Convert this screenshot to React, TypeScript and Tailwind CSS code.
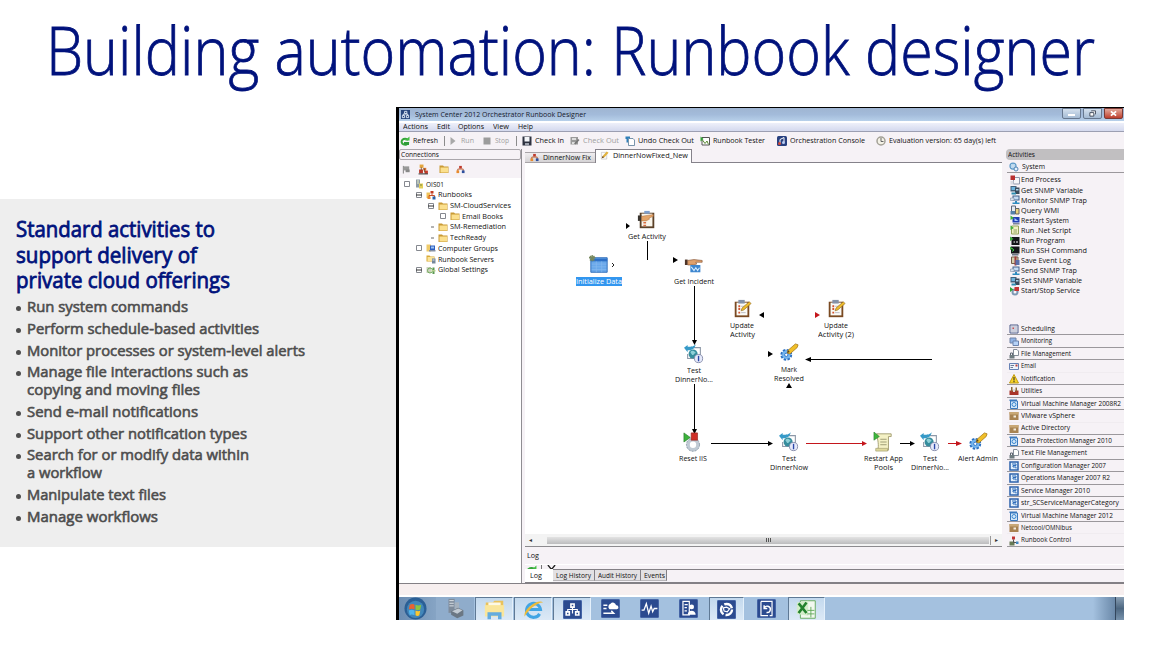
import { useLayoutEffect, useRef, type ReactNode } from "react";
import clsx from "clsx";

// Keeps a line of text at a fixed width, whatever the font's own metrics are
function Fit({ w, children, className }: { w: number; children: ReactNode; className?: string }) {
  const ref = useRef<HTMLSpanElement>(null);
  useLayoutEffect(() => {
    const el = ref.current;
    if (!el) return;
    el.style.transform = "none";
    el.style.transform = `scaleX(${w / el.getBoundingClientRect().width})`;
  }, [w]);
  return (
    <span className={clsx("block shrink-0", className)} style={{ width: w }}>
      <span ref={ref} className="inline-block origin-left whitespace-nowrap">{children}</span>
    </span>
  );
}

const TREE_GLYPHS: Record<string, ReactNode> = {
  folder: (
    <>
      <path d="M1 3h7l2 2h9v13H1z" fill="#c99a34" />
      <path d="M3 7h15v10H3z" fill="#fbe08e" />
    </>
  ),
  server: (
    <>
      <path d="M4 1h8v16H4z" fill="#8d9aa5" />
      <path d="M6 3h4v2H6zM6 7h4v2H6z" fill="#e8f0c8" />
      <path d="M10 9h8v10h-8z" fill="#e3cf5a" />
      <path d="M12 11h4v2h-4z" fill="#7c8a3c" />
    </>
  ),
  runbooks: (
    <>
      <path d="M1 5h7v11H1z" fill="#f0c35a" />
      <path d="M9 2h6v5H9z" fill="#c33c22" />
      <path d="M12 7v4M6 15v-4h11v4" stroke="#c8502c" strokeWidth="2" fill="none" />
      <path d="M3 13h6v5H3z" fill="#e78b32" />
      <path d="M13 13h6v6h-6z" fill="#2a62a8" />
    </>
  ),
  org: (
    <>
      <path d="M7 2h6v6H7z" fill="#c0392b" />
      <path d="M4 14V9h12v5" stroke="#b4582c" strokeWidth="2" fill="none" />
      <path d="M1 12h6v6H1z" fill="#e88a2d" />
      <path d="M13 12h6v6h-6z" fill="#2d4f9e" />
    </>
  ),
  computers: (
    <>
      <path d="M1 3h9v14H1z" fill="#efcb6a" />
      <path d="M8 5h10v9H8z" fill="#2e5fc0" />
      <path d="M10 7h6v4h-6z" fill="#9bc4f5" />
      <path d="M6 14h13v3H6z" fill="#8590a5" />
    </>
  ),
  bookServers: (
    <>
      <path d="M1 3h6l2 2h8v10H1z" fill="#d9a937" />
      <path d="M3 6h13v8H3z" fill="#fbe49a" />
      <path d="M12 9h7v10h-7z" fill="#74879b" />
      <path d="M13 11h4v2h-4z" fill="#dce6ee" />
    </>
  ),
  settings: (
    <>
      <path d="M1 4h9v12H1z" fill="#cdd0c0" />
      <circle cx="8" cy="11" r="5" fill="none" stroke="#6fae57" strokeWidth="2" />
      <path d="M13 5h4v13h-4z" fill="#5b9952" />
      <path d="M11 10h8v3h-8z" fill="#b5cf8f" />
    </>
  ),
  people: (
    <>
      <path d="M3 1h7v6H3z" fill="#e3a53d" />
      <path d="M2 10h7v7H2z" fill="#bb3427" />
      <path d="M10 7h5v5h-5z" fill="#e0742c" />
      <path d="M12 12h6v6h-6z" fill="#c53a2a" />
      <path d="M6 6v5M9 9h3v6" stroke="#6d4a2a" strokeWidth="1.500" fill="none" />
      <path d="M1 17h17v2H1z" fill="#444" />
    </>
  ),
  flag: (
    <>
      <path d="M3 2v17" stroke="#777" strokeWidth="2" />
      <path d="M4 3h12v9H4z" fill="#999" />
      <path d="M8 10h9v6H8z" fill="#888" />
    </>
  ),
  refresh: (
    <>
      <path d="M16 8a7 6 0 1 0 1 5" fill="none" stroke="#35a639" strokeWidth="4" />
      <path d="M10 9h9V1z" fill="#43bd44" />
      <path d="M8 12h10v6H8z" fill="#2f9c38" />
    </>
  ),
  play: <path d="M5 2v16l10-8z" fill="#a8a8a8" />,
  stop: <path d="M3 3h14v14H3z" fill="#9c9c9c" />,
  save: (
    <>
      <path d="M1 1h18v18H1z" fill="#2e3240" />
      <path d="M5 2h10v9H5z" fill="#f3f5f8" />
      <path d="M6 14h8v5H6z" fill="#9da2ad" />
    </>
  ),
  checkout: (
    <>
      <path d="M1 2h15v15H1z" fill="#9a9a9a" />
      <path d="M4 4h8v4H4zM4 12h6v4H4z" fill="#ddd" />
      <path d="M8 15l8-9 3 2-8 9z" fill="#777" />
    </>
  ),
  undo: (
    <>
      <path d="M7 5h9l3 3v11H7z" fill="#fff" stroke="#4f7391" strokeWidth="1.500" />
      <path d="M1 1h9v4H6v8H3V6H1z" fill="#2f7fb8" />
    </>
  ),
  tester: (
    <>
      <path d="M4 3h15v15H4z" fill="#fff" stroke="#555" strokeWidth="2" />
      <path d="M1 1v10l6-5z" fill="#36a336" />
      <path d="M5 8l5 7 4-5 3 7" stroke="#5d8c36" strokeWidth="2" fill="none" />
    </>
  ),
  console: (
    <>
      <rect x="0" y="0" width="20" height="20" rx="3" fill="#28407f" />
      <path d="M6 16V7l8-4v9" stroke="#fff" strokeWidth="2" fill="none" />
      <circle cx="5" cy="15" r="3" fill="#d44b3b" />
      <circle cx="13" cy="13" r="3" fill="#b9cdf3" />
    </>
  ),
  clock: (
    <>
      <circle cx="10" cy="10" r="8" fill="#f4f2e6" stroke="#a3a096" strokeWidth="3" />
      <path d="M10 4v7h5" stroke="#666" strokeWidth="2" fill="none" />
    </>
  ),
  pencil: (
    <>
      <path d="M3 3h12v15H3z" fill="#fafafa" stroke="#a6a6a6" />
      <path d="M4 16l2-5 9-10 4 3-9 10z" fill="#e1b23e" />
      <path d="M4 16l2-5 3 3z" fill="#5a3a28" />
    </>
  ),
  app: (
    <>
      <path d="M0 0h20v20H0z" fill="#27457c" />
      <path d="M8 3h5v5H8zM3 12h5v5H3zM12 12h5v5h-5zM5 12V9h10v3" stroke="#e6effb" fill="none" strokeWidth="2" />
    </>
  ),
};

const ACT_GLYPHS: Record<string, ReactNode> = {
  gear: (
    <>
      <circle cx="8" cy="8" r="6" fill="#d8ecfa" stroke="#5d9ac8" strokeWidth="2.500" />
      <circle cx="8" cy="8" r="2.500" fill="#fff" stroke="#5d9ac8" />
      <circle cx="14" cy="14" r="4" fill="#e3f1fb" stroke="#5284b5" strokeWidth="2" />
    </>
  ),
  endProcess: (
    <>
      <path d="M7 5h12v13H7z" fill="#f6f6f8" stroke="#8f97aa" strokeWidth="2" />
      <path d="M1 1h9v9H1z" fill="#b93030" />
      <path d="M1 12h6v7H1z" fill="#d9dbe2" />
    </>
  ),
  snmp: (
    <>
      <path d="M1 2h12v11H1z" fill="#42627c" />
      <path d="M3 4h8v6H3z" fill="#6cb3dc" />
      <path d="M10 5h9v13h-9z" fill="#3a4b5c" />
      <path d="M12 8h5v3h-5z" fill="#a8d1e6" />
      <path d="M3 15h9v4H3z" fill="#2d8cb0" />
    </>
  ),
  trap: (
    <>
      <path d="M5 1h14v10H5z" fill="#44628b" />
      <path d="M7 3h10v6H7z" fill="#c4dcf4" />
      <path d="M1 6h7v5H1z" fill="#d8e2ee" stroke="#73839b" />
      <path d="M10 12h4v3h5v3H5v-3h5z" fill="#2e8cbf" />
    </>
  ),
  query: (
    <>
      <path d="M3 2h8v12H3z" fill="#e4eaf2" stroke="#5b6678" strokeWidth="2" />
      <path d="M11 7h7v11h-7z" fill="#e9d27c" stroke="#656565" strokeWidth="2" />
      <path d="M1 12h9v7H1z" fill="#5580a8" />
    </>
  ),
  restart: (
    <>
      <path d="M5 4h14v11H5z" fill="#1f3fb5" />
      <path d="M1 1v9l7-4z" fill="#3fae3c" />
      <path d="M9 6l8 6H9z" fill="#a9c8fa" />
      <path d="M6 16h13v3H6z" fill="#7e8799" />
    </>
  ),
  script: (
    <>
      <path d="M3 2h14v16H3z" fill="#f2f0c4" stroke="#94a35a" strokeWidth="2" />
      <path d="M1 1v9l7-4z" fill="#3fae3c" />
      <path d="M7 10h7M7 14h7" stroke="#8ea362" strokeWidth="2" />
    </>
  ),
  program: (
    <>
      <path d="M3 2h16v16H3z" fill="#15171a" />
      <path d="M0 1v9l7-4z" fill="#3fae3c" />
      <path d="M7 12h3M12 12h4" stroke="#fff" strokeWidth="2" />
    </>
  ),
  ssh: (
    <>
      <path d="M2 1h17v14H2z" fill="#15171a" />
      <path d="M0 1v7l6-3z" fill="#3fae3c" />
      <path d="M4 5l4 3-4 3" stroke="#42d04a" strokeWidth="2" fill="none" />
      <path d="M4 16h13v3H4z" fill="#6f7785" />
    </>
  ),
  eventLog: (
    <>
      <path d="M3 2h13v13H3z" fill="#d6cfae" stroke="#755e46" strokeWidth="2" />
      <path d="M9 1h4v18H9z" fill="#a23b3b" />
      <path d="M11 8h8v10h-8z" fill="#5b6fa8" />
    </>
  ),
  service: (
    <>
      <circle cx="10" cy="12" r="5" fill="none" stroke="#7d99b4" strokeWidth="4" />
      <path d="M0 2v10l7-5z" fill="#2fa436" />
      <path d="M9 2h9v8H9z" fill="#c83434" />
    </>
  ),
  calendar: (
    <>
      <path d="M2 2h16v16H2z" fill="#fff" stroke="#4a5886" strokeWidth="2" />
      <path d="M3 6h14M3 10h14M3 14h14M6 3v14M10 3v14M14 3v14" stroke="#8890ae" strokeWidth="1" />
      <path d="M7 7h3v3H7z" fill="#c85050" />
    </>
  ),
  monitor: (
    <>
      <path d="M2 2h12v10H2z" fill="#8fb3e6" stroke="#7183a5" strokeWidth="2" />
      <path d="M8 8h11v9H8z" fill="#b5d2f7" stroke="#6a82ad" strokeWidth="2" />
    </>
  ),
  file: (
    <>
      <path d="M9 1h7l3 3v9H9z" fill="#fff" stroke="#858d99" strokeWidth="2" />
      <path d="M3 12V8h4v4" stroke="#5f6772" strokeWidth="2" fill="none" />
      <path d="M1 12h10v7H1z" fill="#6e7b80" />
    </>
  ),
  mail: (
    <>
      <path d="M1 3h18v12H1z" fill="#eef3fb" stroke="#6681b5" strokeWidth="2" />
      <path d="M3 7h7M3 11h5" stroke="#6f7b95" strokeWidth="2" />
      <path d="M13 5h4v4h-4z" fill="#bf4038" />
    </>
  ),
  warn: (
    <>
      <path d="M10 1l9 17H1z" fill="#f8d52a" stroke="#c39b10" strokeWidth="2" />
      <path d="M10 6v7M10 14v2.500" stroke="#222" strokeWidth="2" />
    </>
  ),
  tools: (
    <>
      <path d="M1 9h18v9H1z" fill="#a9342a" />
      <path d="M4 2h3v9H4zM13 3h3v8h-3z" fill="#8c6a3a" />
      <path d="M8 6h4v6H8z" fill="#ddd" />
    </>
  ),
  vm: (
    <>
      <path d="M1 1h15v3H1z" fill="#3b79bd" />
      <path d="M3 4h14v15H3z" fill="#d5e7f8" stroke="#3b79bd" strokeWidth="2" />
      <circle cx="10" cy="11" r="4" fill="none" stroke="#3a87d0" strokeWidth="2" />
    </>
  ),
  box: (
    <>
      <path d="M1 2h18v16H1z" fill="#a88352" />
      <path d="M1 2h18v5H1z" fill="#c9a876" />
      <path d="M9 9h5v4H9z" fill="#f4ecdc" />
    </>
  ),
  sys: (
    <>
      <path d="M2 2h16v16H2z" fill="#e4effa" stroke="#2d62ac" strokeWidth="3" />
      <path d="M6 6h8v3H8v3h6v3" stroke="#2f6cba" strokeWidth="2" fill="none" />
    </>
  ),
  control: (
    <>
      <path d="M1 11h10v8H1z" fill="#687b56" />
      <path d="M6 1h6v6H6z" fill="#c03434" />
      <path d="M9 7v6h7" stroke="#555" strokeWidth="2" fill="none" />
      <path d="M14 11h5v5h-5z" fill="#3f87c1" />
    </>
  ),
};

function Glyph({ name, className }: { name: string; className: string }) {
  return (
    <svg viewBox="0 0 20 20" className={clsx("shrink-0", className)}>
      {TREE_GLYPHS[name] ?? ACT_GLYPHS[name]}
    </svg>
  );
}

const HEADING = [
  { text: "Standard activities to", w: 199 },
  { text: "support delivery of", w: 181 },
  { text: "private cloud offerings", w: 214 },
];

const BULLETS = [
  [{ text: "Run system commands", w: 161 }],
  [{ text: "Perform schedule-based activities", w: 232 }],
  [{ text: "Monitor processes or system-level alerts", w: 278 }],
  [{ text: "Manage file interactions such as", w: 221 }, { text: "copying and moving files", w: 173 }],
  [{ text: "Send e-mail notifications", w: 171 }],
  [{ text: "Support other notification types", w: 220 }],
  [{ text: "Search for or modify data within", w: 222 }, { text: "a workflow", w: 75 }],
  [{ text: "Manipulate text files", w: 139 }],
  [{ text: "Manage workflows", w: 131 }],
];

function Summary() {
  return (
    <div className="mt-[92px] h-[348px] w-[396px] bg-[#eeeeee] pl-4 pt-[18px]">
      <h2 className="text-[21px] leading-[25.6px] text-[#00127c] [-webkit-text-stroke:0.8px_#00127c]">
        {HEADING.map((l) => <Fit key={l.text} w={l.w}>{l.text}</Fit>)}
      </h2>
      <ul className="mt-[3.500px] flex flex-col gap-[3.700px] text-[15px] leading-[18px] text-[#4d4d4d] [-webkit-text-stroke:0.6px_#4d4d4d]">
        {BULLETS.map((lines) => (
          <li key={lines[0].text} className="flex">
            <span className="mt-[9px] mr-[6px] size-[5px] shrink-0 rounded-full bg-[#4d4d4d]" />
            <div>{lines.map((l) => <Fit key={l.text} w={l.w}>{l.text}</Fit>)}</div>
          </li>
        ))}
      </ul>
    </div>
  );
}

function TitleBar() {
  return (
    <div className="flex h-[13px] items-center bg-linear-to-b from-[#9fb5d2] via-[#a3bbda] to-[#b7d0ea] pl-[2px]">
      <Glyph name="app" className="size-[9px]" />
      <Fit w={171} className="ml-[5px] text-[7.500px] text-[#16202e]">System Center 2012 Orchestrator Runbook Designer</Fit>
      <div className="ml-auto flex h-[11px] items-start gap-[2px] self-start pr-px">
        <div className="flex h-[11px] w-[19px] items-center justify-center rounded-b-xs border border-[#67788f] bg-linear-to-b from-[#d5e1ee] to-[#a4bbd4]">
          <div className="mt-[2px] h-[2px] w-[7px] bg-white" />
        </div>
        <div className="flex h-[11px] w-[19px] items-center justify-center rounded-b-xs border border-[#67788f] bg-linear-to-b from-[#d5e1ee] to-[#a4bbd4]">
          <svg viewBox="0 0 8 8" className="size-[7px]">
            <path d="M2.500 1h5v4M1 3h4.500v4H1z" stroke="#333e4e" fill="#fff" />
          </svg>
        </div>
        <div className="flex h-[11px] w-[19px] items-center justify-center rounded-b-xs border border-[#7a3a35] bg-linear-to-b from-[#e2a79a] to-[#bd3c2c]">
          <svg viewBox="0 0 8 8" className="size-[7px]">
            <path d="M1 1.500l6 5M7 1.500l-6 5" stroke="#fff" strokeWidth="2" />
          </svg>
        </div>
      </div>
    </div>
  );
}

const MENUS = [
  { text: "Actions", w: 25, gap: "ml-[4px]" },
  { text: "Edit", w: 13, gap: "ml-[9px]" },
  { text: "Options", w: 26, gap: "ml-[8px]" },
  { text: "View", w: 16, gap: "ml-[9px]" },
  { text: "Help", w: 15, gap: "ml-[9px]" },
];

const TOOLS = [
  { icon: "refresh", text: "Refresh", w: 25, gap: "", dim: false },
  { icon: "", text: "", w: 0, gap: "ml-[6px]", dim: false },
  { icon: "play", text: "Run", w: 13, gap: "ml-[3px]", dim: true },
  { icon: "stop", text: "Stop", w: 14, gap: "ml-[8px]", dim: true },
  { icon: "", text: "", w: 0, gap: "ml-[7px]", dim: false },
  { icon: "save", text: "Check In", w: 29, gap: "ml-[5px]", dim: false },
  { icon: "checkout", text: "Check Out", w: 36, gap: "ml-[6px]", dim: true },
  { icon: "undo", text: "Undo Check Out", w: 56, gap: "ml-[6px]", dim: false },
  { icon: "tester", text: "Runbook Tester", w: 52, gap: "ml-[6px]", dim: false },
  { icon: "console", text: "Orchestration Console", w: 75, gap: "ml-[12px]", dim: false },
  { icon: "clock", text: "Evaluation version: 65 day(s) left", w: 107, gap: "ml-[11px]", dim: false },
];

function Bars() {
  return (
    <>
      <div className="flex h-[11px] items-center border-t-2 border-b border-t-white border-b-[#9c9fb2] bg-linear-to-b from-[#eef0fa] to-[#d4d9ee] text-[7.500px]">
        {MENUS.map((m) => <Fit key={m.text} w={m.w} className={m.gap}>{m.text}</Fit>)}
      </div>
      <div className="flex h-[17px] items-center bg-[#f6f2f6] pl-px text-[7.500px]">
        {TOOLS.map((t, i) =>
          t.icon ? (
            <div key={i} className={clsx("flex items-center gap-[3px]", t.gap, t.dim ? "text-[#a0a0a0]" : "text-[#111]")}>
              <Glyph name={t.icon} className="size-[10px]" />
              <Fit w={t.w}>{t.text}</Fit>
            </div>
          ) : (
            <div key={i} className={clsx("h-[10px] w-px bg-[#8c8c8c]", t.gap)} />
          )
        )}
      </div>
    </>
  );
}

const TREE = [
  { text: "OIS01", w: 18, icon: "server", pad: "pl-[5px]", mark: "box" },
  { text: "Runbooks", w: 34, icon: "runbooks", pad: "pl-[17px]", mark: "minus" },
  { text: "SM-CloudServices", w: 61, icon: "folder", pad: "pl-[29px]", mark: "minus" },
  { text: "Email Books", w: 41, icon: "folder", pad: "pl-[41px]", mark: "box" },
  { text: "SM-Remediation", w: 56, icon: "folder", pad: "pl-[29px]", mark: "dash" },
  { text: "TechReady", w: 36, icon: "folder", pad: "pl-[29px]", mark: "dash" },
  { text: "Computer Groups", w: 60, icon: "computers", pad: "pl-[17px]", mark: "box" },
  { text: "Runbook Servers", w: 56, icon: "bookServers", pad: "pl-[17px]", mark: "none" },
  { text: "Global Settings", w: 50, icon: "settings", pad: "pl-[17px]", mark: "minus" },
];

function Connections() {
  return (
    <div className="flex w-[123px] flex-col border-r border-[#8f8d92]">
      <div className="flex h-[11px] items-center rounded-xs border border-[#aaa6ab] bg-[#f6f2f6] pl-px text-[7.500px]">
        <Fit w={38}>Connections</Fit>
      </div>
      <div className="flex h-[18px] items-center bg-[#f6f2f6] pl-[3px]">
        <Glyph name="flag" className="size-[9px]" />
        <Glyph name="people" className="ml-[7px] size-[11px]" />
        <Glyph name="folder" className="ml-[10px] size-[10px]" />
        <Glyph name="org" className="ml-[7px] size-[9px]" />
      </div>
      <div className="flex-1 bg-white pt-px text-[7.500px]">
        {TREE.map((t) => (
          <div key={t.text} className={clsx("flex h-[10.700px] items-center", t.pad)}>
            <svg viewBox="0 0 6 6" className="mr-[4px] size-[6px] shrink-0">
              {(t.mark === "box" || t.mark === "minus") && <path d="M.5.5h5v5h-5z" fill="#fff" stroke="#85888f" />}
              {t.mark === "minus" && <path d="M0 3h6" stroke="#333" />}
              {t.mark === "dash" && <path d="M3 3h3" stroke="#666" />}
            </svg>
            <Glyph name={t.icon} className="mr-[2px] size-[10px]" />
            <Fit w={t.w}>{t.text}</Fit>
          </div>
        ))}
      </div>
    </div>
  );
}

const NODE_ART: Record<string, ReactNode> = {
  clipboard: (
    <>
      <path d="M3 3h16v17H3z" fill="#7a4a22" />
      <path d="M5 4h12v14H5z" fill="#fbfbf7" />
      <path d="M7 1h7v4H7z" fill="#8492a8" />
      <path d="M7 8h2M7 11h2M7 15h2" stroke="#d2532f" strokeWidth="2" />
      <path d="M10 8h5M10 15h5" stroke="#b8b8c0" />
      <path d="M10 13l1-3 8-7 2 2-8 7z" fill="#eebc2d" stroke="#926b20" strokeWidth=".7" />
    </>
  ),
  getActivity: (
    <>
      <path d="M3 3h16v17H3z" fill="#5b4128" />
      <path d="M5 4h12v14H5z" fill="#faf6ec" />
      <path d="M8 1h6v3H8z" fill="#7e9fce" />
      <path d="M1 6h4v6H1z" fill="#39342f" />
      <path d="M5 7l6-1 7-1v2l-5 2 1 1-4 2H5z" fill="#e3a468" stroke="#a8683a" strokeWidth=".5" />
      <path d="M7 14h3M7 17h3" stroke="#d86d40" strokeWidth="1.500" />
    </>
  ),
  incident: (
    <>
      <path d="M1 5h3v6H1z" fill="#4d3427" />
      <path d="M4 6l7-1 9 1v2h-7l1 2-4 1H4z" fill="#dfa06b" stroke="#744022" strokeWidth=".6" />
      <path d="M7 11h11v8H7z" fill="#3d86cf" />
      <path d="M8 13l3 4 2-3 2 3 2-3" stroke="#d5ebff" fill="none" strokeWidth="1.200" />
    </>
  ),
  table: (
    <>
      <path d="M2 3h18v16H2z" fill="#69a8ea" stroke="#2c6bb8" />
      <path d="M2 4h18v3H2z" fill="#2d6fc6" />
      <path d="M3 10h16M3 13h16M3 16h16M8 7v12M14 7v12" stroke="#86b9f0" strokeWidth=".8" />
      <path d="M0 3h7M3.500 0v7M1 1l5 5M6 1L1 6" stroke="#77885d" strokeWidth="1.500" />
    </>
  ),
  test: (
    <>
      <path d="M6 4h12v12H4v-5" fill="#fff" stroke="#8d98a8" strokeWidth="1.200" />
      <path d="M0 4l4-3v2c4 0 7 0 9-3-1 5-4 7-9 7v2z" fill="#369ac8" />
      <circle cx="10" cy="11" r="5" fill="#368d9d" />
      <path d="M7 9c2-3 5-1 6 1-2 0-2 3-4 2z" fill="#8ed0d7" />
      <circle cx="16" cy="16" r="4.500" fill="#e6eafb" stroke="#8289a8" />
      <path d="M16 13v6" stroke="#2b47a7" strokeWidth="1.500" />
    </>
  ),
  gearPencil: (
    <>
      <circle cx="8" cy="13" r="5" fill="#75b6ef" stroke="#2b6fc0" strokeWidth="3" strokeDasharray="2.500 1.400" />
      <circle cx="8" cy="13" r="4.500" fill="#75b6ef" />
      <circle cx="8" cy="13" r="1.800" fill="#fff" stroke="#2f74c4" />
      <path d="M9 11l1-3 8-7 3 1-1 3-8 7z" fill="#f0bf28" stroke="#a27414" strokeWidth=".8" />
      <path d="M9 11l1-3 2 2z" fill="#53412a" />
    </>
  ),
  reset: (
    <>
      <circle cx="11" cy="14" r="5.500" fill="none" stroke="#c0cad4" strokeWidth="4" />
      <circle cx="11" cy="14" r="7.200" fill="none" stroke="#8998a8" strokeDasharray="2 1.500" />
      <path d="M1 1v10l7-5z" fill="#3bb23b" stroke="#267c29" strokeWidth=".7" />
      <path d="M9 1h7v8H9z" fill="#cf3028" stroke="#8f2420" strokeWidth=".7" />
    </>
  ),
  scroll: (
    <>
      <path d="M4 2h16v3h-3v15H5c2-5 0-12-1-18z" fill="#f4f1c5" stroke="#a09b6e" />
      <path d="M3 18h13v3H3z" fill="#dfd99c" stroke="#a09b6e" strokeWidth=".7" />
      <path d="M8 8h7M8 11h7M8 14h7" stroke="#97966f" />
      <path d="M1 0v9l6-4z" fill="#3db63b" stroke="#267c29" strokeWidth=".6" />
    </>
  ),
};

// x and y are the icon's centre on the canvas
const NODES = [
  { x: 122, y: 57, art: "getActivity", lines: [{ text: "Get Activity", w: 38 }] },
  { x: 74, y: 102, art: "table", lines: [{ text: "Initialize Data", w: 46 }], selected: true },
  { x: 169, y: 102, art: "incident", lines: [{ text: "Get Incident", w: 40 }] },
  { x: 217, y: 146, art: "clipboard", lines: [{ text: "Update", w: 24 }, { text: "Activity", w: 25 }] },
  { x: 311, y: 146, art: "clipboard", lines: [{ text: "Update", w: 24 }, { text: "Activity (2)", w: 36 }] },
  { x: 169, y: 191, art: "test", lines: [{ text: "Test", w: 14 }, { text: "DinnerNo...", w: 38 }] },
  { x: 264, y: 190, art: "gearPencil", lines: [{ text: "Mark", w: 16 }, { text: "Resolved", w: 30 }] },
  { x: 168, y: 279, art: "reset", lines: [{ text: "Reset IIS", w: 28 }] },
  { x: 264, y: 279, art: "test", lines: [{ text: "Test", w: 14 }, { text: "DinnerNow", w: 38 }] },
  { x: 358, y: 279, art: "scroll", lines: [{ text: "Restart App", w: 39 }, { text: "Pools", w: 19 }] },
  { x: 405, y: 279, art: "test", lines: [{ text: "Test", w: 14 }, { text: "DinnerNo...", w: 38 }] },
  { x: 453, y: 279, art: "gearPencil", lines: [{ text: "Alert Admin", w: 40 }] },
];

function Canvas() {
  return (
    <div className="relative h-[371px] bg-white">
      <svg viewBox="0 0 477 371" className="absolute inset-0 h-[371px] w-[477px]">
        <g stroke="#000" strokeWidth="1">
          <path d="M122.500 78v19M169.500 123v57M169.500 221v50M186 280.500h58M281 196.500h126M375 280.500h12" />
        </g>
        <path d="M281 280.500h58M423 280.500h11" stroke="#c4161c" />
        <g fill="#000">
          <path d="M101 60v6l4-3zM148 94v6l5-3zM239 149v6l-5-3zM243 188v6l5-3zM264 220l-3 5h6z" />
          <path d="M167 177h5l-2.500 5zM167 266h5l-2.500 5zM243 278v5l5-2.500zM286 194v5l-6-2.500zM385 278v5l5-2.500z" />
        </g>
        <path d="M290 149v6l5-3zM337 278v5l5-2.500zM431 278v5l6-2.500z" fill="#c4161c" />
        <path d="M87 100l2 2-2 2" stroke="#222" fill="none" />
      </svg>
      {NODES.map((n, i) => (
        <div
          key={i}
          className="absolute flex w-[60px] -translate-x-1/2 flex-col items-center text-[7.500px] leading-[9px]"
          style={{ left: n.x, top: n.y - 10 }}
        >
          <svg viewBox="0 0 22 22" className="mb-[2px] size-[20px]">{NODE_ART[n.art]}</svg>
          {n.lines.map((l) => (
            <Fit key={l.text} w={l.w} className={n.selected ? "bg-[#3296ef] text-white" : "text-[#111]"}>{l.text}</Fit>
          ))}
        </div>
      ))}
    </div>
  );
}

const LOG_TABS = [
  { text: "Log History", w: 35, box: "w-[42px]" },
  { text: "Audit History", w: 39, box: "w-[46px]" },
  { text: "Events", w: 21, box: "w-[26px]" },
];

function Designer() {
  return (
    <div className="ml-[3px] flex w-[477px] flex-col bg-[#f6f2f6]">
      <div className="flex h-[14px] items-end text-[7.500px]">
        <div className="flex h-[11px] w-[70px] items-center gap-[4px] border-t border-b border-[#a8a4a8] bg-linear-to-b from-[#f0eef0] to-[#d5d3d5] pl-[5px]">
          <Glyph name="org" className="size-[9px]" />
          <Fit w={48}>DinnerNow Fix</Fit>
        </div>
        <div className="flex h-[14px] w-[97px] items-center gap-[4px] border border-b-0 border-[#85828a] bg-white pb-[2px] pl-[4px]">
          <Glyph name="pencil" className="size-[9px]" />
          <Fit w={75}>DinnerNowFixed_New</Fit>
        </div>
        <div className="h-px flex-1 bg-[#85828a]" />
      </div>
      <Canvas />
      <div className="flex h-[13px] items-center border-b border-[#8c8a8e] bg-[#f3f3f3] text-[6px] text-[#333]">
        <span className="w-[22px] pl-[4px]">◂</span>
        <div className="flex h-[7px] flex-1 items-center justify-center gap-px bg-linear-to-b from-[#e3e3e3] to-[#bcbcbe]">
          <div className="h-[4px] w-px bg-[#555]" />
          <div className="h-[4px] w-px bg-[#555]" />
          <div className="h-[4px] w-px bg-[#555]" />
        </div>
        <span className="ml-px w-[12px] border-l border-[#999] pl-[4px]">▸</span>
      </div>
    </div>
  );
}

function LogPanel() {
  return (
    <div className="flex h-[36px] flex-col bg-[#f6f2f6] text-[7px]">
      <Fit w={12} className="mt-[3px] ml-[2px] leading-[11px]">Log</Fit>
      <div className="mt-[3px] flex h-[5px] items-start overflow-hidden border-t border-white pl-px">
        <Glyph name="refresh" className="size-[11px]" />
        <div className="ml-[4px] h-[5px] w-px bg-[#777]" />
        <svg viewBox="0 0 10 10" className="ml-[5px] size-[9px]">
          <path d="M1 0l4 5 4-5" fill="none" stroke="#222" strokeWidth="1.500" />
        </svg>
      </div>
      <div className="flex h-[14px] items-start border-b border-[#838085]">
        <div className="h-[13px] w-[28px] bg-white pt-px pl-[5px] leading-[12px]"><Fit w={12}>Log</Fit></div>
        {LOG_TABS.map((t) => (
          <div key={t.text} className={clsx("h-[12px] border-t border-r border-b border-t-[#838085] border-r-[#838085] border-b-[#b9b6b9] bg-[#e3e1e3] pl-[3px] leading-[12px]", t.box)}>
            <Fit w={t.w}>{t.text}</Fit>
          </div>
        ))}
        <div className="h-px flex-1 bg-[#838085]" />
      </div>
    </div>
  );
}

const SYSTEM_ITEMS = [
  { icon: "endProcess", text: "End Process", w: 40 },
  { icon: "snmp", text: "Get SNMP Variable", w: 62 },
  { icon: "trap", text: "Monitor SNMP Trap", w: 66 },
  { icon: "query", text: "Query WMI", w: 38 },
  { icon: "restart", text: "Restart System", w: 48 },
  { icon: "script", text: "Run .Net Script", w: 50 },
  { icon: "program", text: "Run Program", w: 44 },
  { icon: "ssh", text: "Run SSH Command", w: 66 },
  { icon: "eventLog", text: "Save Event Log", w: 50 },
  { icon: "trap", text: "Send SNMP Trap", w: 56 },
  { icon: "snmp", text: "Set SNMP Variable", w: 61 },
  { icon: "service", text: "Start/Stop Service", w: 59 },
];

const CATEGORIES = [
  { icon: "calendar", text: "Scheduling", w: 34, line: true },
  { icon: "monitor", text: "Monitoring", w: 31, line: true },
  { icon: "file", text: "File Management", w: 50, line: true },
  { icon: "mail", text: "Email", w: 15, line: false },
  { icon: "warn", text: "Notification", w: 34, line: true },
  { icon: "tools", text: "Utilities", w: 21, line: true },
  { icon: "vm", text: "Virtual Machine Manager 2008R2", w: 100, line: true },
  { icon: "box", text: "VMware vSphere", w: 54, line: false },
  { icon: "box", text: "Active Directory", w: 49, line: true },
  { icon: "vm", text: "Data Protection Manager 2010", w: 91, line: true },
  { icon: "file", text: "Text File Management", w: 66, line: true },
  { icon: "sys", text: "Configuration Manager 2007", w: 85, line: true },
  { icon: "sys", text: "Operations Manager 2007 R2", w: 89, line: true },
  { icon: "sys", text: "Service Manager 2010", w: 69, line: true },
  { icon: "sys", text: "str_SCServiceManagerCategory", w: 98, line: true },
  { icon: "vm", text: "Virtual Machine Manager 2012", w: 92, line: true },
  { icon: "box", text: "Netcool/OMNibus", w: 51, line: false },
  { icon: "control", text: "Runbook Control", w: 50, line: true },
];

function Activities() {
  return (
    <div className="ml-[4px] flex w-[118px] flex-col bg-[#f6f2f6] text-[7.500px]">
      <div className="flex h-[11px] items-center rounded-l-sm bg-[#c1bfc1] pl-[2px]"><Fit w={27}>Activities</Fit></div>
      <div className="ml-px flex h-[13px] items-center gap-[3px] border-b border-[#9b989c] pt-px pl-[2px]">
        <Glyph name="gear" className="size-[10px]" />
        <Fit w={23}>System</Fit>
      </div>
      <div className="h-[150px] pt-[2px] pl-[4px]">
        {SYSTEM_ITEMS.map((s) => (
          <div key={s.text} className="flex h-[10.080px] items-center gap-[1px]">
            <Glyph name={s.icon} className="size-[10px]" />
            <Fit w={s.w}>{s.text}</Fit>
          </div>
        ))}
      </div>
      <div className="text-[7px]">
        {CATEGORIES.map((c) => (
          <div key={c.text} className={clsx("ml-px flex h-[12.450px] items-center gap-[2px] border-b pt-px pl-[2px]", c.line ? "border-[#9b989c]" : "border-[#f0ecf0]")}>
            <Glyph name={c.icon} className="size-[10px]" />
            <Fit w={c.w}>{c.text}</Fit>
          </div>
        ))}
      </div>
    </div>
  );
}

const TASK_ART: Record<string, ReactNode> = {
  start: (
    <>
      <circle cx="12" cy="12" r="11.500" fill="#2b5f95" />
      <circle cx="12" cy="13" r="9" fill="#4c97c9" opacity=".7" />
      <path d="M6 8c2-1 4-1 5 0v5c-2-1-4-1-6 0z" fill="#ea6330" />
      <path d="M12 8c2 1 4 1 6 0l-1 5c-2 1-4 1-5 0z" fill="#8cc63e" />
      <path d="M5 14c2-1 4-1 6 0v5c-2-1-4-1-5 0z" fill="#4fb6ee" />
      <path d="M12 14c2 1 4 1 5 0l-1 5c-1 1-3 1-4 0z" fill="#fbc72f" />
    </>
  ),
  serverMgr: (
    <>
      <path d="M4 1h7v16H4z" fill="#7e8b9a" />
      <path d="M5 3h5M5 6h5M5 9h5" stroke="#e6ebf0" />
      <path d="M11 5h5v8h-5z" fill="#a5b1bd" />
      <path d="M7 15l8-4 6 3v6l-7 3-7-4z" fill="#6b7783" />
      <path d="M8 15l7-3 5 2-6 4z" fill="#c2cad2" />
    </>
  ),
  folder: (
    <>
      <path d="M2 4h8l2-2h10v16H2z" fill="#e9c25c" />
      <path d="M5 4h14v4H5z" fill="#fdf9e6" />
      <path d="M1 7h22v13H1z" fill="#fae69b" />
      <path d="M4 23v-8h16v8h-4v-4H8v4z" fill="#63acdf" />
    </>
  ),
  ie: (
    <>
      <path d="M19 17a8 8 0 1 1 1-5H7" fill="none" stroke="#42a5e4" strokeWidth="3.500" />
      <path d="M2 20C-1 13 17-1 23 4c-6-1-18 9-21 16z" fill="#edbb38" />
    </>
  ),
  org: (
    <>
      <path d="M9 4h6v6H9zM3 14h6v6H3zM15 14h6v6h-6z" fill="#fff" />
      <path d="M12 9v8M6 14v-2h12v2" stroke="#fff" strokeWidth="1.500" fill="none" />
      <path d="M11 6h2v2h-2zM5 16h2v2H5zM17 16h2v2h-2z" fill="#2b4a8f" />
    </>
  ),
  cloud: (
    <>
      <path d="M10 12a4 4 0 0 1 2-6 4 4 0 0 1 7 2 2.500 2.500 0 0 1 1 5h-9z" fill="#fff" />
      <path d="M3 8h5M3 12h4M3 18h13l-3-3" stroke="#fff" strokeWidth="1.800" fill="none" />
    </>
  ),
  pulse: <path d="M2 14h3l3-8 3 12 3-9 2 7 2-4h4" stroke="#fff" strokeWidth="1.600" fill="none" />,
  people: (
    <>
      <path d="M5 3h8v17H5z" fill="none" stroke="#fff" strokeWidth="1.500" />
      <path d="M7 7h4M7 11h3M7 15h3" stroke="#fff" strokeWidth="1.500" />
      <circle cx="16" cy="10" r="3" fill="#fff" />
      <path d="M11 20c0-7 10-7 10 0z" fill="#fff" />
    </>
  ),
  globe: (
    <>
      <circle cx="12" cy="12" r="7" fill="none" stroke="#fff" strokeWidth="3" strokeDasharray="12 2.600" />
      <path d="M8 10l4-1 4 2-3 4-4-1z" fill="none" stroke="#fff" strokeWidth="1.500" />
    </>
  ),
  restore: (
    <>
      <path d="M5 3h14v18h-3M5 3v18h9" fill="none" stroke="#fff" strokeWidth="1.500" />
      <path d="M9 8v4h4M9 12a4 4 0 1 1 3 5" fill="none" stroke="#fff" strokeWidth="1.800" />
    </>
  ),
  excel: (
    <>
      <path d="M5 2h17v20H5z" fill="#f2f8ef" stroke="#5ca553" />
      <path d="M1 4l13-2v17L1 17z" fill="#d3edc9" />
      <path d="M3 5l9 11M12 4L3 16" stroke="#24822d" strokeWidth="3" />
      <path d="M13 13h8M13 17h8M17 9v12" stroke="#5ca553" />
    </>
  ),
};

const TASKS = [
  { art: "serverMgr", box: "w-[38px]", tile: false, open: false },
  { art: "folder", box: "w-[38px]", tile: false, open: true },
  { art: "ie", box: "w-[38px]", tile: false, open: true },
  { art: "org", box: "w-[38px]", tile: true, open: true },
  { art: "cloud", box: "w-[37px]", tile: true, open: false },
  { art: "pulse", box: "w-[38px]", tile: true, open: false },
  { art: "people", box: "w-[39px]", tile: true, open: false },
  { art: "globe", box: "w-[35px]", tile: true, open: true },
  { art: "restore", box: "w-[42px]", tile: true, open: false },
  { art: "excel", box: "w-[37px]", tile: false, open: true },
];

function Taskbar() {
  return (
    <div className="flex h-[23px] items-stretch bg-[#a4c1df]">
      <div className="flex w-[37px] items-center bg-linear-to-r from-[#6c8db2] to-[#86a4c4] pl-[5px]">
        <svg viewBox="0 0 24 24" className="size-[23px]">{TASK_ART.start}</svg>
      </div>
      {TASKS.map((t) => (
        <div
          key={t.art}
          className={clsx(
            "flex items-center justify-center",
            t.box,
            t.open && "border-x border-t border-[#5f7995] border-r-[#e4f0fb] bg-linear-to-b from-[#c3d9ee] to-[#dce9f6]",
            t.art === "serverMgr" ? "mr-px bg-[#8faccb]" : "mr-px"
          )}
        >
          <svg viewBox="0 0 24 24" className={t.tile ? "size-[19px]" : "size-[21px]"}>
            {t.tile && <rect x="0" y="0" width="24" height="24" rx="2" fill="#2b4a8f" stroke="#6f8fc9" />}
            {TASK_ART[t.art]}
          </svg>
        </div>
      ))}
      <div className="ml-auto w-[22px] bg-linear-to-r from-[#a4c1df] to-[#6b89a9]" />
      <div className="w-[9px] border-l border-[#33465c] bg-linear-to-b from-[#8aa0b5] via-[#4d6781] to-[#7893ad]" />
    </div>
  );
}

function RunbookWindow() {
  return (
    <div className="h-[513px] w-[728px] border-t border-l-3 border-black bg-[#f6f2f6] text-[#111]">
      <TitleBar />
      <Bars />
      <div className="flex h-[434px]">
        <Connections />
        <div className="flex flex-1 flex-col">
          <div className="flex h-[398px]">
            <Designer />
            <Activities />
          </div>
          <div className="pl-[3px]"><LogPanel /></div>
        </div>
      </div>
      <div className="h-[14px] border-t border-b-2 border-t-[#838085] border-b-white bg-[#f7efef]" />
      <Taskbar />
    </div>
  );
}

export default function App() {
  return (
    <main className="h-[648px] w-[1152px] overflow-hidden bg-white font-['Open_Sans','Noto_Sans',sans-serif]">
      <h1 className="h-[107px] pt-[5px] pl-[46px] text-[65.500px] leading-[90px] font-light text-[#00127c] [-webkit-text-stroke:0.8px_#00127c]">
        <Fit w={1049}>Building automation: Runbook designer</Fit>
      </h1>
      <div className="flex">
        <Summary />
        <RunbookWindow />
      </div>
    </main>
  );
}
